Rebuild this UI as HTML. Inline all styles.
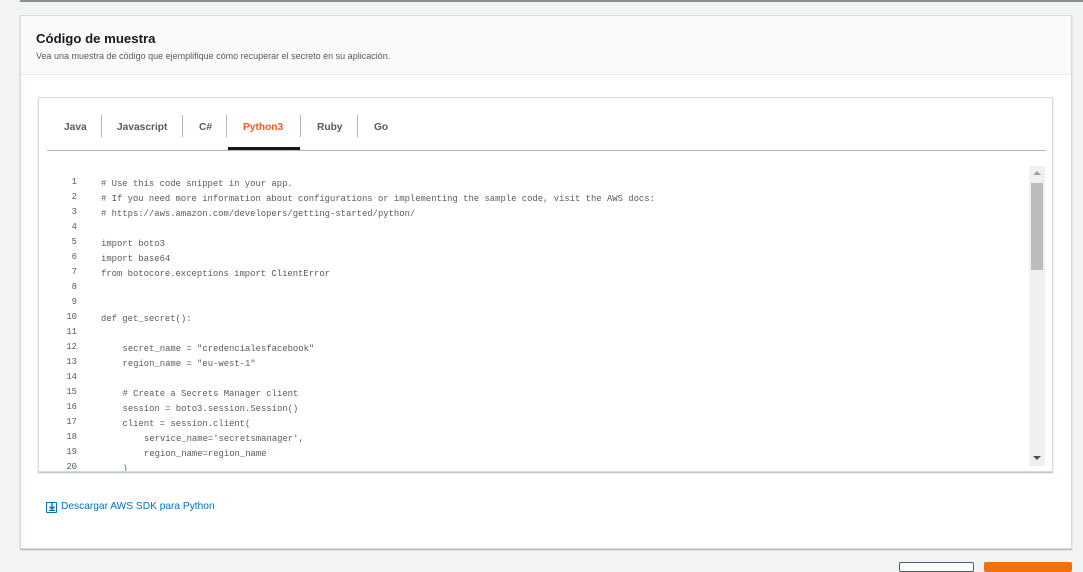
<!DOCTYPE html>
<html><head><meta charset="utf-8"><style>
*{margin:0;padding:0;box-sizing:border-box}
body{width:1083px;height:565px;overflow:hidden;background:#f2f3f3;font-family:"Liberation Sans",sans-serif;position:relative}
.topline{position:absolute;left:20px;top:0;width:1063px;height:2px;background:#879196}
.card{position:absolute;left:20px;top:15px;width:1052px;height:534px;background:#fff;border:1px solid #d5dbdb;box-shadow:0 1px 1px rgba(0,28,36,.3)}
.hdr{height:59px;background:#fafafa;border-bottom:1px solid #eaeded;padding:14px 0 0 15px}
.hdr h2{font-size:13.2px;font-weight:bold;color:#16191f;line-height:17px}
.hdr p{font-size:9px;color:#545b64;margin-top:4px}
.box{position:absolute;left:17px;top:81px;width:1015px;height:375px;border:1px solid #d5dbdb;box-shadow:0 1px 1px rgba(0,28,36,.3);overflow:hidden}
.tabs{position:absolute;left:8px;top:0;width:999px;height:53px;border-bottom:1px solid #aab7b8}
.tab{position:absolute;top:24px;font-size:10.2px;font-weight:bold;color:#545b64}
.sep{position:absolute;top:17px;width:1px;height:22px;background:#aab7b8}
.act{position:absolute;left:181px;top:49px;width:72px;height:3px;background:#16191f}
.code{position:absolute;left:0;top:79px;font-family:"Liberation Mono",monospace;font-size:8.9px;color:#545b64}
.l{position:absolute;height:15px;line-height:15px;white-space:pre}
.n{position:absolute;width:20px;text-align:right}
.sb{position:absolute;left:990px;top:68px;width:16px;height:300px;background:#f0f0f0}
.th{position:absolute;left:2px;top:17px;width:12px;height:87px;background:#bcbcbc}
.dl{position:absolute;top:501px;font-size:10.2px;color:#0073bb}
.ic{position:absolute;width:11px;height:11px;border:1.5px solid #0073bb;border-radius:1px}
</style></head><body>
<div class="topline"></div>
<div class="card">
<div class="hdr"><h2>Código de muestra</h2><p>Vea una muestra de código que ejemplifique cómo recuperar el secreto en su aplicación.</p></div>
<div class="box">
<div class="tabs">
<span class="tab" style="left:17px">Java</span>
<div class="sep" style="left:54px"></div>
<span class="tab" style="left:70px">Javascript</span>
<div class="sep" style="left:135px"></div>
<span class="tab" style="left:152px">C#</span>
<div class="sep" style="left:179px"></div>
<span class="tab" style="left:196px;color:#ec5b24">Python3</span>
<div class="sep" style="left:253px"></div>
<span class="tab" style="left:270px">Ruby</span>
<div class="sep" style="left:310px"></div>
<span class="tab" style="left:327px">Go</span>
<div class="act"></div>
</div>
<div class="code" id="c"></div>
<div class="sb"><div style="position:absolute;left:4px;top:5px;border-left:4px solid transparent;border-right:4px solid transparent;border-bottom:4px solid #a0a0a0"></div><div class="th"></div><div style="position:absolute;left:4px;top:290px;border-left:4px solid transparent;border-right:4px solid transparent;border-top:4px solid #505050"></div></div>
</div>
</div>
<div class="ic" style="left:46px;top:502px"></div>
<svg style="position:absolute;left:48px;top:503px" width="8" height="8"><path d="M4 0V6M1.5 3.5L4 6L6.5 3.5M1 7.5H7" stroke="#0073bb" stroke-width="1.4" fill="none"/></svg>
<span class="dl" style="left:61px">Descargar AWS SDK para Python</span>
<div style="position:absolute;left:899px;top:562px;width:75px;height:10px;border:1px solid #545b64;border-radius:2px;background:#fff"></div>
<div style="position:absolute;left:984px;top:562px;width:88px;height:10px;background:#ec7211;border-radius:2px"></div>
<script>
var L=[["# Use this code snippet in your app.",0],["# If you need more information about configurations or implementing the sample code, visit the AWS docs:",0],["# https://aws.amazon.com/developers/getting-started/python/",0],["",0],["import boto3",0],["import base64",0],["from botocore.exceptions import ClientError",0],["",0],["",0],["def get_secret():",0],["",0],["secret_name = \"credencialesfacebook\"",1],["region_name = \"eu-west-1\"",1],["",0],["# Create a Secrets Manager client",1],["session = boto3.session.Session()",1],["client = session.client(",1],["service_name='secretsmanager',",2],["region_name=region_name",2],[")",1]];
var h="";L.forEach(function(x,i){var y=i*15;h+='<div class="n" style="left:18px;top:'+y+'px">'+(i+1)+'</div><div class="l" style="left:'+(62+x[1]*21.5)+'px;top:'+y+'px">'+x[0].replace(/&/g,"&amp;").replace(/</g,"&lt;")+'</div>';});
document.getElementById("c").innerHTML=h;
</script>
</body></html>
